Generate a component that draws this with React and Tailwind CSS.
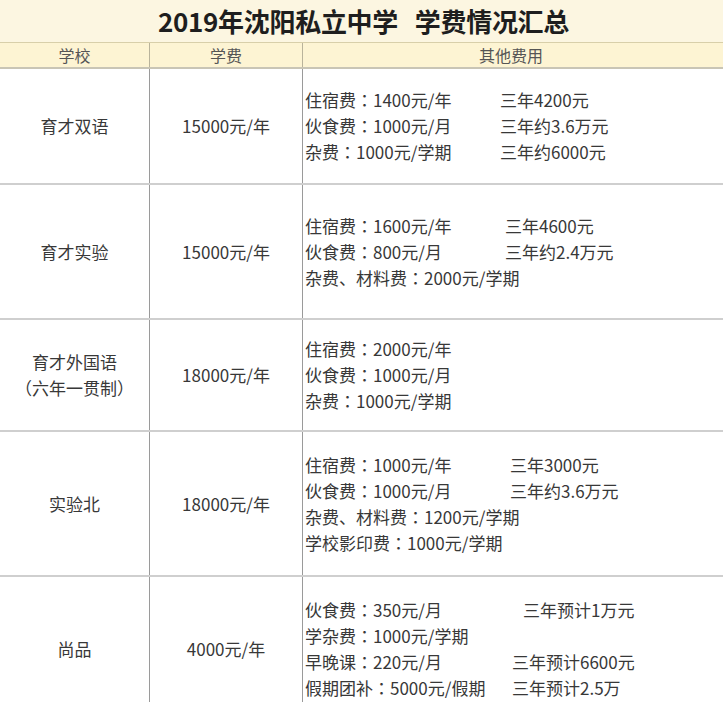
import * as React from "react";

const rows = [
  {
    school: ["育才双语"],
    fee: "15000元/年",
    h: "h-[116px]",
    lines: [
      ["住宿费：1400元/年", "三年4200元", "w-[195px]"],
      ["伙食费：1000元/月", "三年约3.6万元", "w-[195px]"],
      ["杂费：1000元/学期", "三年约6000元", "w-[195px]"],
    ],
  },
  {
    school: ["育才实验"],
    fee: "15000元/年",
    h: "h-[135px]",
    lines: [
      ["住宿费：1600元/年", "三年4600元", "w-[200px]"],
      ["伙食费：800元/月", "三年约2.4万元", "w-[200px]"],
      ["杂费、材料费：2000元/学期", "", "w-auto"],
    ],
  },
  {
    school: ["育才外国语", "（六年一贯制）"],
    fee: "18000元/年",
    h: "h-[112px]",
    lines: [
      ["住宿费：2000元/年", "", "w-auto"],
      ["伙食费：1000元/月", "", "w-auto"],
      ["杂费：1000元/学期", "", "w-auto"],
    ],
  },
  {
    school: ["实验北"],
    fee: "18000元/年",
    h: "h-[145px]",
    lines: [
      ["住宿费：1000元/年", "三年3000元", "w-[205px]"],
      ["伙食费：1000元/月", "三年约3.6万元", "w-[205px]"],
      ["杂费、材料费：1200元/学期", "", "w-auto"],
      ["学校影印费：1000元/学期", "", "w-auto"],
    ],
  },
  {
    school: ["尚品"],
    fee: "4000元/年",
    h: "h-[145px]",
    lines: [
      ["伙食费：350元/月", "三年预计1万元", "w-[218px]"],
      ["学杂费：1000元/学期", "", "w-auto"],
      ["早晚课：220元/月", "三年预计6600元", "w-[207px]"],
      ["假期团补：5000元/假期", "三年预计2.5万", "w-[207px]"],
    ],
  },
];

// the source image centres the full-width colon, as the TC font does
function Item({ text }) {
  const [label, value] = text.split("：");
  return (
    <>
      {label}
      <span className="font-['Noto_Sans_CJK_TC',sans-serif]">：</span>
      {value}
    </>
  );
}

export default function App() {
  return (
    <div className="w-[723px] bg-white text-[#383838] font-['Noto_Sans_CJK_SC',sans-serif]">
      {/* Title */}
      <div className="h-[43px] bg-[#fcf6e1] flex items-center justify-center border-b border-[#d8cfa9]">
        <h1 className="text-[26px] font-bold text-[#1e1e1e] leading-none tracking-[-0.3px] pl-[4px]">
          2019年沈阳私立中学&nbsp;&nbsp; 学费情况汇总
        </h1>
      </div>

      {/* Header */}
      <div className="grid grid-cols-[150px_153px_416px] h-[26px] bg-[#fdf4d3] border-b-2 border-[#c9c5b5] text-[16px] text-[#555] leading-none">
        <div className="flex items-center justify-center border-r border-[#b9b39b]">学校</div>
        <div className="flex items-center justify-center border-r border-[#b9b39b]">学费</div>
        <div className="flex items-center justify-center">其他费用</div>
      </div>

      {rows.map((r, i) => (
        <div
          key={i}
          className={`grid grid-cols-[150px_153px_416px] border-b-2 border-[#cfcfcf] text-[17px] ${r.h}`}
        >
          <div className="flex flex-col items-center justify-center border-r border-[#9a9a9a] leading-[26px]">
            {r.school.map((s) => (
              <span key={s}>{s}</span>
            ))}
          </div>
          <div className="flex items-center justify-center border-r border-[#9a9a9a]">
            {r.fee}
          </div>
          <div className="flex flex-col justify-center pl-[2px] leading-[26px] whitespace-nowrap">
            {r.lines.map(([a, b, w]) => (
              <div key={a} className="flex">
                <span className={w}>
                  <Item text={a} />
                </span>
                {b && <span>{b}</span>}
              </div>
            ))}
          </div>
        </div>
      ))}
    </div>
  );
}
